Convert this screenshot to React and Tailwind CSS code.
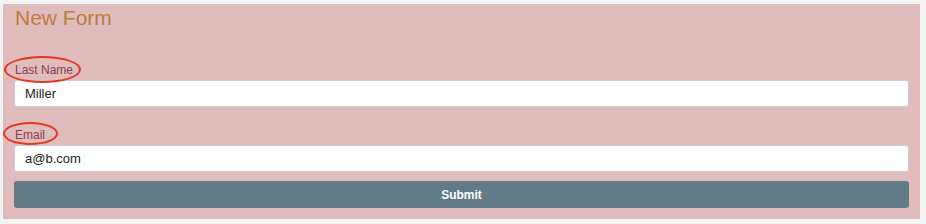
import { useState } from "react";

const font = { fontFamily: '"Liberation Sans", Arial, sans-serif' };

function Field({ label, value, onChange, ring, first }) {
  return (
    <div className={first ? "mt-[33px]" : "mt-[21px]"}>
      <div className="relative">
        <label className="block pl-px text-[12px] leading-[14px] text-[#8c3d50]">{label}</label>
        {/* annotation ring around the label */}
        <span
          className="pointer-events-none absolute rounded-[50%] border-2 border-[#e8351f]"
          style={ring}
        />
      </div>
      <input
        value={value}
        onChange={(e) => onChange(e.target.value)}
        className="mt-[3px] block h-[27px] w-full rounded-[3px] border border-[#c9cdd4] bg-white pl-[10px] text-[13px] text-[#222] outline-none"
      />
    </div>
  );
}

export default function App() {
  const [lastName, setLastName] = useState("Miller");
  const [email, setEmail] = useState("a@b.com");

  return (
    <div className="h-[224px] bg-[#f4f4f4] pl-[3px] pr-[6px] pt-[4px]" style={font}>
      <form
        className="bg-[#e0bcbc] px-[11px] pt-[2px] pb-[11px]"
        onSubmit={(e) => e.preventDefault()}
      >
        <h1 className="pl-px text-[21px] leading-[24px] text-[#b97d3f]">New Form</h1>

        <Field
          first
          label="Last Name"
          value={lastName}
          onChange={setLastName}
          ring={{ left: -10, top: -7, width: 77, height: 27 }}
        />
        <Field
          label="Email"
          value={email}
          onChange={setEmail}
          ring={{ left: -11, top: -6, width: 55, height: 23 }}
        />

        <button
          type="submit"
          className="mt-[9px] block h-[27px] w-full rounded-[3px] bg-[#637b86] text-[12px] font-bold text-white"
        >
          Submit
        </button>
      </form>
    </div>
  );
}
